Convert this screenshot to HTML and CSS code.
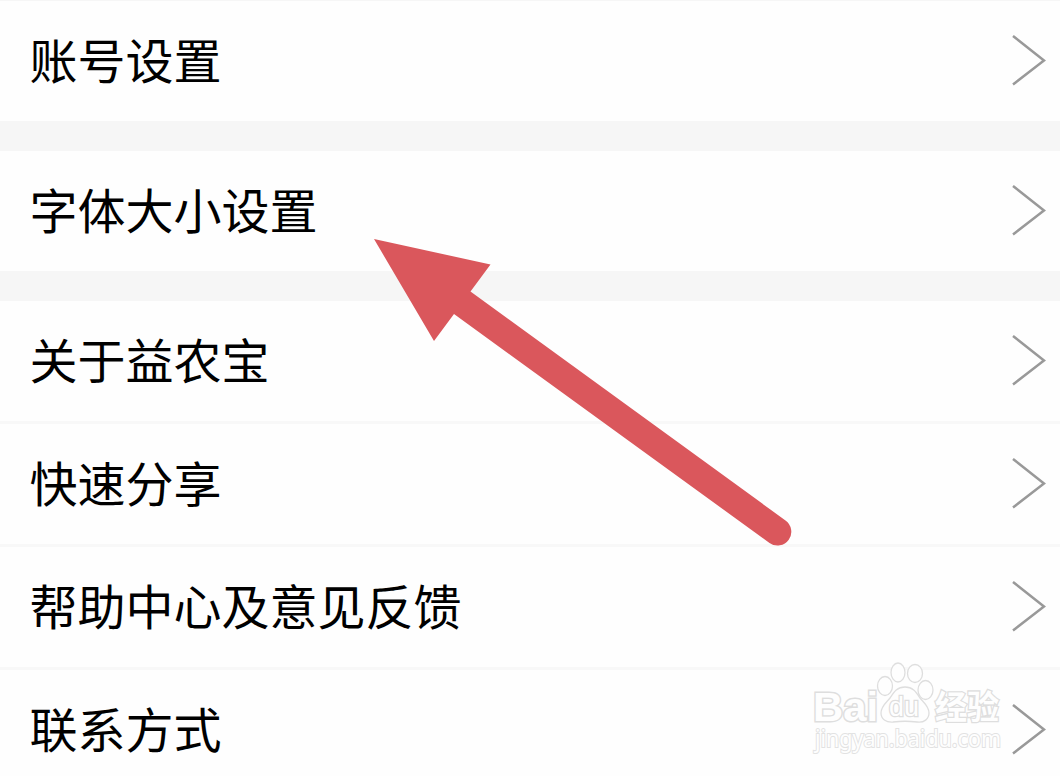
FILE: index.html
```html
<!DOCTYPE html>
<html lang="zh-CN">
<head>
    <meta charset="UTF-8" />
    <meta name="viewport" content="width=device-width, initial-scale=1.0" />
    <title>设置</title>
    <link rel="stylesheet" href="styles.css">
</head>
<body>
    <main class="settings">
        <section class="group">
            <a class="row">
                <span class="label">账号设置</span>
                <svg class="chevron" viewBox="0 0 36 54"><path d="M3 3L34 27.500L3 51.500" /></svg>
            </a>
        </section>

        <section class="group">
            <a class="row">
                <span class="label">字体大小设置</span>
                <svg class="chevron" viewBox="0 0 36 54"><path d="M3 3L34 27.500L3 51.500" /></svg>
            </a>
        </section>

        <section class="group">
            <a class="row">
                <span class="label">关于益农宝</span>
                <svg class="chevron" viewBox="0 0 36 54"><path d="M3 3L34 27.500L3 51.500" /></svg>
            </a>
            <a class="row">
                <span class="label">快速分享</span>
                <svg class="chevron" viewBox="0 0 36 54"><path d="M3 3L34 27.500L3 51.500" /></svg>
            </a>
            <a class="row">
                <span class="label">帮助中心及意见反馈</span>
                <svg class="chevron" viewBox="0 0 36 54"><path d="M3 3L34 27.500L3 51.500" /></svg>
            </a>
            <a class="row">
                <span class="label">联系方式</span>
                <svg class="chevron" viewBox="0 0 36 54"><path d="M3 3L34 27.500L3 51.500" /></svg>
            </a>
        </section>
    </main>

    <!-- arrow pointing at the font size row -->
    <svg class="pointer" viewBox="0 0 420 312">
        <path d="M1 1L117.500 26.500L97.500 53.500L412.500 282.500A13.500 13.500 0 0 1 396.500 305L81 76L61 103Z" />
    </svg>

    <svg class="watermark" viewBox="0 0 200 100">
        <g class="mark">
            <text class="brand" x="12" y="60.500" textLength="65" lengthAdjust="spacingAndGlyphs">Bai</text>
            <path d="M104 27C96 27 93 32 89 38C85 43 80 46 80 53C80 59 85 62.500 92 62C100 61 108 61 116 62C123 63 128 59 128 53C128 46 123 43 119 38C115 32 112 27 104 27Z" />
            <ellipse cx="84" cy="26" rx="7.500" ry="9.500" />
            <ellipse cx="97" cy="12.500" rx="7" ry="9.500" />
            <ellipse cx="114" cy="13.500" rx="7.500" ry="9" />
            <ellipse cx="124.500" cy="30" rx="7.500" ry="9.500" />
            <text class="du" x="88" y="56" textLength="30" lengthAdjust="spacingAndGlyphs">du</text>
            <text class="cn" x="134" y="58.500" textLength="64" lengthAdjust="spacingAndGlyphs">经验</text>
        </g>
        <text class="site" x="14" y="86.500" textLength="186" lengthAdjust="spacingAndGlyphs">jingyan.baidu.com</text>
    </svg>
</body>
</html>
```
FILE: styles.css
```css
* {
    box-sizing: border-box;
}

body {
    margin: 0;
    height: 776px;
    position: relative;
    overflow: hidden;
    background: #f6f6f6;
    color: #000;
    font-family: "Noto Sans CJK SC", sans-serif;
}

.settings {
    display: flex;
    flex-direction: column;
    gap: 30px;
    padding-top: 1px;
}

.group {
    background: #fefefe;
}

.row {
    display: flex;
    align-items: center;
    justify-content: space-between;
    height: 120px;
    padding: 0 14px 2px 29.5px;
}

.row + .row {
    height: 123px;
    border-top: 3px solid #f8f8f8;
}

.label {
    font-size: 48px;
    line-height: 70px;
    padding-bottom: 4px;
}

.chevron {
    width: 36px;
    height: 54px;
    fill: none;
    stroke: #999;
    stroke-width: 2.5;
}

.pointer {
    position: absolute;
    left: 373px;
    top: 238px;
    width: 420px;
    height: 312px;
    fill: #da575c;
}

.watermark {
    position: absolute;
    left: 801px;
    top: 660px;
    width: 200px;
    height: 100px;
    overflow: visible;
}

.mark {
    fill: #fefefe;
    stroke: #dedede;
    stroke-width: 1.3;
}

.brand {
    font: bold 41px "Liberation Sans", sans-serif;
    stroke-width: 3;
    paint-order: stroke;
}

.du {
    font: 27px "Liberation Sans", sans-serif;
    stroke-width: 2.6;
    paint-order: stroke;
}

.cn {
    font: bold 33px "Noto Sans CJK SC", sans-serif;
    stroke-width: 2.6;
    paint-order: stroke;
}

.site {
    font: 23px "Noto Sans", sans-serif;
    fill: #fefefe;
    stroke: #e2e2e2;
    stroke-width: 2;
    paint-order: stroke;
}
```
